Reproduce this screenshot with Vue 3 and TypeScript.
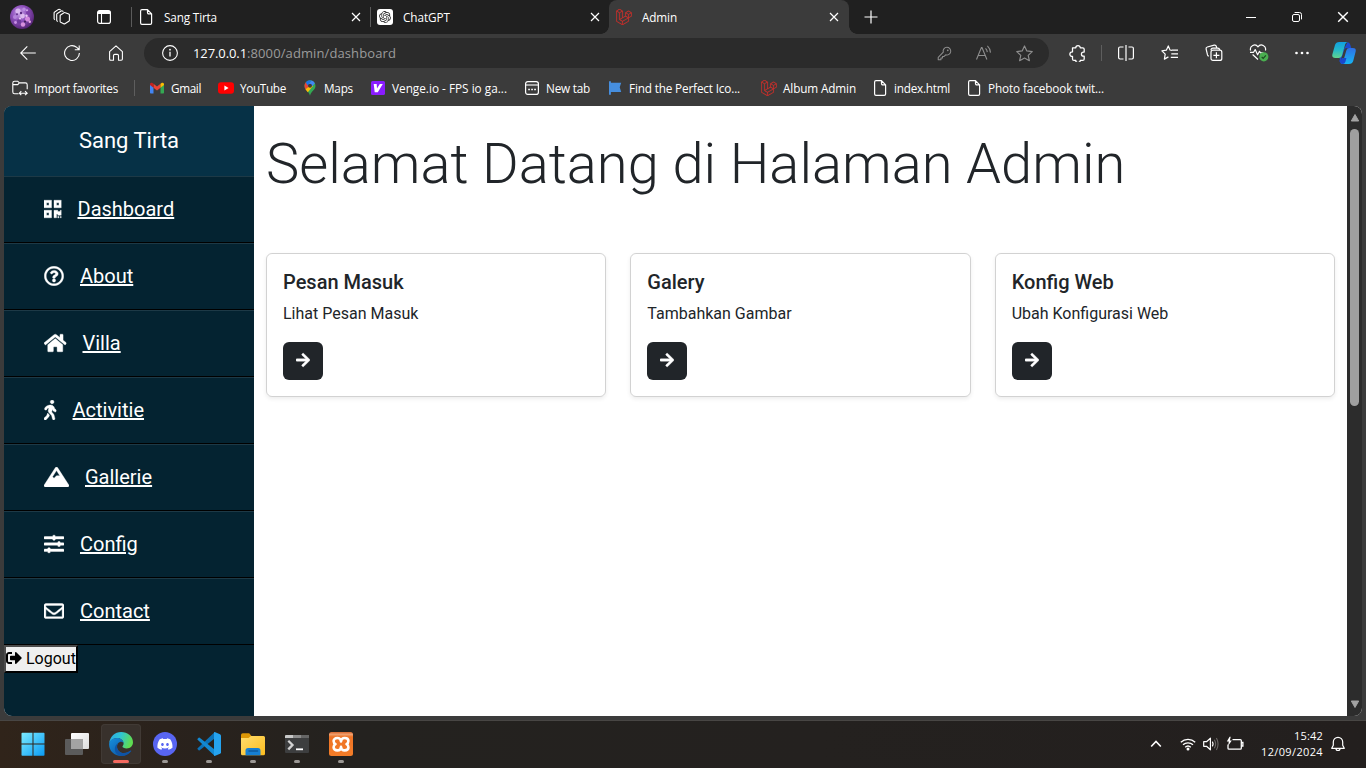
<script setup lang="ts">
import type { Directive } from 'vue'

interface Tab { id: string; title: string; icon: string; width: number; active?: boolean }
interface Bookmark { title: string; icon: string; slot: number; width: number }
interface MenuItem { label: string; icon: string; em: number }
interface Card { title: string; text: string }
interface App { icon: string; state: 'none' | 'open' | 'focus' }

const tabs: Tab[] = [
  { id: 'home', title: 'Sang Tirta', icon: 'doc', width: 53 },
  { id: 'gpt', title: 'ChatGPT', icon: 'gpt', width: 47 },
  { id: 'admin', title: 'Admin', icon: 'laravel', width: 35, active: true },
]

const bookmarks: Bookmark[] = [
  { title: 'Gmail', icon: 'gmail', slot: 69, width: 30 },
  { title: 'YouTube', icon: 'youtube', slot: 84, width: 46 },
  { title: 'Maps', icon: 'maps', slot: 68, width: 29 },
  { title: 'Venge.io - FPS io ga...', icon: 'venge', slot: 154, width: 115 },
  { title: 'New tab', icon: 'newtab', slot: 83, width: 44 },
  { title: 'Find the Perfect Ico...', icon: 'flag', slot: 154, width: 111 },
  { title: 'Album Admin', icon: 'laravel', slot: 111, width: 73 },
  { title: 'index.html', icon: 'doc', slot: 94, width: 56 },
  { title: 'Photo facebook twit...', icon: 'doc', slot: 150, width: 116 },
]

const menu: MenuItem[] = [
  { label: 'Dashboard', icon: 'qrcode', em: 0.875 },
  { label: 'About', icon: 'question', em: 1 },
  { label: 'Villa', icon: 'house', em: 1.125 },
  { label: 'Activitie', icon: 'walking', em: 0.625 },
  { label: 'Gallerie', icon: 'mountain', em: 1.25 },
  { label: 'Config', icon: 'sliders', em: 1 },
  { label: 'Contact', icon: 'envelope', em: 1 },
]

const cards: Card[] = [
  { title: 'Pesan Masuk', text: 'Lihat Pesan Masuk' },
  { title: 'Galery', text: 'Tambahkan Gambar' },
  { title: 'Konfig Web', text: 'Ubah Konfigurasi Web' },
]

const apps: App[] = [
  { icon: 'windows', state: 'none' },
  { icon: 'taskview', state: 'none' },
  { icon: 'edge', state: 'focus' },
  { icon: 'discord', state: 'open' },
  { icon: 'vscode', state: 'open' },
  { icon: 'folder', state: 'open' },
  { icon: 'terminal', state: 'open' },
  { icon: 'xampp', state: 'open' },
]

// Spreads the letters of a label evenly so that it fills the given width.
const vFit: Directive<HTMLElement, number> = {
  mounted(el, binding) {
    const count = (el.textContent ?? '').length
    const natural = el.getBoundingClientRect().width
    if (count > 0) el.style.letterSpacing = `${(binding.value - natural) / count}px`
  },
}
</script>

<template>
  <div class="screen">
    <svg class="sprite" width="0" height="0" aria-hidden="true">
      <defs>
        <linearGradient id="gWin" x1="0" y1="0" x2="1" y2="1"><stop offset="0" stop-color="#7cecff" /><stop offset="1" stop-color="#0a9bf5" /></linearGradient>
        <linearGradient id="gEdgeTop" x1="0" y1="0" x2="1" y2=".3"><stop offset="0" stop-color="#2aa5e8" /><stop offset=".5" stop-color="#2fc5d3" /><stop offset="1" stop-color="#5fdc52" /></linearGradient>
        <linearGradient id="gEdgeLow" x1="0" y1="0" x2="1" y2="1"><stop offset="0" stop-color="#1690dd" /><stop offset="1" stop-color="#0b4b98" /></linearGradient>
        <linearGradient id="gFolder" x1="0" y1="0" x2="1" y2="1"><stop offset="0" stop-color="#ffdd6e" /><stop offset="1" stop-color="#fcbc1e" /></linearGradient>
        <linearGradient id="gCopA" x1="0" y1="0" x2="0" y2="1"><stop offset="0" stop-color="#109fe0" /><stop offset=".5" stop-color="#25b9c9" /><stop offset="1" stop-color="#62d58c" /></linearGradient>
        <linearGradient id="gCopB" x1="0" y1="0" x2="0" y2="1"><stop offset="0" stop-color="#2f6fe6" /><stop offset="1" stop-color="#16b5f2" /></linearGradient>
        <radialGradient id="gAvatar" cx=".4" cy=".35" r=".7"><stop offset="0" stop-color="#c9a4e8" /><stop offset=".45" stop-color="#8f52bd" /><stop offset="1" stop-color="#51206f" /></radialGradient>
        <linearGradient id="gXampp" x1="0" y1="0" x2="0" y2="1"><stop offset="0" stop-color="#d8662c" /><stop offset=".1" stop-color="#f0a070" /><stop offset=".2" stop-color="#ee7426" /><stop offset="1" stop-color="#f47d28" /></linearGradient>
        <linearGradient id="gTask" x1="0" y1="0" x2="1" y2="1"><stop offset="0" stop-color="#ffffff" /><stop offset="1" stop-color="#dcdcdc" /></linearGradient>
      </defs>

      <symbol id="i-avatar" viewBox="0 0 24 24">
        <circle cx="12" cy="12" r="12" fill="url(#gAvatar)" />
        <circle cx="8" cy="6" r="2.6" fill="#d9b8f0" /><circle cx="14" cy="4.400" r="1.800" fill="#b98be0" />
        <circle cx="5" cy="12" r="2" fill="#b583dc" /><circle cx="12.500" cy="11" r="2.400" fill="#dcb9ee" />
        <circle cx="18" cy="8" r="2" fill="#7c3ea8" /><circle cx="17.500" cy="14" r="2.500" fill="#d58ade" />
        <circle cx="9" cy="16.500" r="2.200" fill="#6f3a9c" /><circle cx="13" cy="19.500" r="2.200" fill="#d791dd" />
        <circle cx="11" cy="8" r="1.200" fill="#592a80" /><circle cx="15" cy="16.600" r="1.100" fill="#45205f" />
        <circle cx="5.500" cy="17.500" r="1.400" fill="#c890e5" /><circle cx="19.800" cy="16.800" r="1.200" fill="#e3a8e5" />
        <circle cx="16.500" cy="10.800" r="1.200" fill="#e6c6f2" /><circle cx="10" cy="13.600" r="1" fill="#ecd0f6" />
        <circle cx="7" cy="9.300" r="1" fill="#64318e" /><circle cx="17" cy="5.200" r="1" fill="#d3a9ea" />
      </symbol>
      <symbol id="i-spaces" viewBox="0 0 20 20">
        <g fill="none" stroke="currentColor" stroke-width="1.1" stroke-linejoin="round">
          <path d="M8.200 8.200 12 5.700q.7-.4 1.400 0l3.300 1.400q.7.3.7 1v5.100q0 .7-.6 1l-3.900 2.500q-.6.300-1.200 0L8.700 15.300q-.6-.3-.6-1z" />
          <path d="M5.800 14.400 5.100 14q-.4-.3-.4-.9V7.500q0-.7.600-1L9.200 4q.6-.4 1.200 0l1 .5" />
          <path d="m3 12.700-.5-.3q-.4-.3-.4-.9V6q0-.7.600-1l3.800-2.600q.6-.3 1.200 0l1 .5" />
        </g>
      </symbol>
      <symbol id="i-panel" viewBox="0 0 16 16">
        <rect x="1.600" y="1.600" width="12.800" height="12.800" rx="2.200" fill="none" stroke="currentColor" stroke-width="1.200" />
        <path d="M1.500 5V3.500q0-2 2-2h9q2 0 2 2V5z" fill="currentColor" /><path d="M5.500 5v9.400" stroke="currentColor" stroke-width="1.100" />
      </symbol>
      <symbol id="i-doc" viewBox="0 0 16 16">
        <path d="M9.500.6H4Q2.600.6 2.600 2v12q0 1.400 1.400 1.400h8.200q1.400 0 1.400-1.400V4.900zv3q0 1.300 1.300 1.300h2.800" fill="none" stroke="currentColor" stroke-width="1.200" stroke-linejoin="round" />
      </symbol>
      <symbol id="i-gpt" viewBox="0 0 24 24">
        <rect width="24" height="24" rx="4.500" fill="#fff" />
        <path transform="translate(3.200 3.200) scale(.733)" fill="#222" d="M22.2819 9.8211a5.9847 5.9847 0 0 0-.5157-4.9108 6.0462 6.0462 0 0 0-6.5098-2.9A6.0651 6.0651 0 0 0 4.9807 4.1818a5.9847 5.9847 0 0 0-3.9977 2.9 6.0462 6.0462 0 0 0 .7427 7.0966 5.98 5.98 0 0 0 .511 4.9107 6.051 6.051 0 0 0 6.5146 2.9001A5.9847 5.9847 0 0 0 13.2599 24a6.0557 6.0557 0 0 0 5.7718-4.2058 5.9894 5.9894 0 0 0 3.9977-2.9001 6.0557 6.0557 0 0 0-.7475-7.0729zm-9.022 12.6081a4.4755 4.4755 0 0 1-2.8764-1.0408l.1419-.0804 4.7783-2.7582a.7948.7948 0 0 0 .3927-.6813v-6.7369l2.02 1.1686a.071.071 0 0 1 .038.052v5.5826a4.504 4.504 0 0 1-4.4945 4.4944zm-9.6607-4.1254a4.4708 4.4708 0 0 1-.5346-3.0137l.142.0852 4.783 2.7582a.7712.7712 0 0 0 .7806 0l5.8428-3.3685v2.3324a.0804.0804 0 0 1-.0332.0615L9.74 19.9502a4.4992 4.4992 0 0 1-6.1408-1.6464zM2.3408 7.8956a4.485 4.485 0 0 1 2.3655-1.9728V11.6a.7664.7664 0 0 0 .3879.6765l5.8144 3.3543-2.0201 1.1685a.0757.0757 0 0 1-.071 0l-4.8303-2.7865A4.504 4.504 0 0 1 2.3408 7.872zm16.5963 3.8558L13.1038 8.364 15.1192 7.2a.0757.0757 0 0 1 .071 0l4.8303 2.7913a4.4944 4.4944 0 0 1-.6765 8.1042v-5.6772a.79.79 0 0 0-.407-.667zm2.0107-3.0231l-.142-.0852-4.7735-2.7818a.7759.7759 0 0 0-.7854 0L9.409 9.2297V6.8974a.0662.0662 0 0 1 .0284-.0615l4.8303-2.7866a4.4992 4.4992 0 0 1 6.6802 4.66zM8.3065 12.863l-2.02-1.1638a.0804.0804 0 0 1-.038-.0567V6.0742a4.4992 4.4992 0 0 1 7.3757-3.4537l-.142.0805L8.704 5.459a.7948.7948 0 0 0-.3927.6813zm1.0976-2.3654l2.602-1.4998 2.6069 1.4998v2.9994l-2.5974 1.4997-2.6067-1.4997Z" />
      </symbol>
      <symbol id="i-laravel" viewBox="0 0 24 24">
        <path fill="#e0302a" stroke="#e0302a" stroke-width=".35" d="M23.642 5.43a.364.364 0 01.014.1v5.149c0 .135-.073.26-.189.326l-4.323 2.49v4.934a.378.378 0 01-.188.326L9.93 23.949a.316.316 0 01-.066.027c-.008.002-.016.008-.024.01a.348.348 0 01-.192 0c-.011-.002-.02-.008-.03-.012-.02-.008-.042-.014-.062-.025L.533 18.755a.376.376 0 01-.189-.326V2.974c0-.033.005-.066.014-.098.003-.012.01-.02.014-.032a.369.369 0 01.023-.058c.004-.013.015-.022.023-.033l.033-.045c.012-.01.025-.018.037-.027.014-.012.027-.024.041-.034H.53L5.043.05a.375.375 0 01.375 0L9.93 2.647h.002c.015.01.027.021.04.033l.038.027c.013.014.02.03.033.045.008.011.02.021.025.033.01.02.017.038.024.058.003.011.01.021.013.032.01.031.014.064.014.098v9.652l3.76-2.164V5.527c0-.033.004-.066.013-.098.003-.01.01-.02.013-.032a.487.487 0 01.024-.059c.007-.012.018-.02.025-.033.012-.015.021-.03.033-.043.012-.012.025-.02.037-.028.014-.01.026-.023.041-.032h.001l4.513-2.598a.375.375 0 01.375 0l4.513 2.598c.016.01.027.021.042.031.012.01.025.018.036.028.013.014.022.03.034.044.008.012.019.021.024.033.011.02.018.04.024.06.006.01.012.021.015.032zm-.74 5.032V6.179l-1.578.908-2.182 1.256v4.283zm-4.51 7.75v-4.287l-2.147 1.225-6.126 3.498v4.325zM1.093 3.624v14.588l8.273 4.761v-4.325l-4.322-2.445-.002-.003H5.04c-.014-.01-.025-.021-.04-.031-.011-.01-.024-.018-.035-.027l-.001-.002c-.013-.012-.021-.025-.031-.04-.01-.011-.021-.022-.028-.036h-.003c-.008-.014-.013-.031-.02-.047-.006-.016-.014-.027-.018-.043a.49.49 0 01-.008-.057c-.002-.014-.006-.027-.006-.041V5.789l-2.18-1.257zM5.23.81L1.47 2.974l3.76 2.164 3.758-2.164zm1.956 13.505l2.182-1.256V3.624l-1.58.91-2.182 1.255v9.435zm11.581-10.95l-3.76 2.163 3.76 2.163 3.759-2.164zm-.376 4.978L16.21 7.087l-1.58-.907v4.283l2.182 1.256 1.58.908zm-8.65 9.654l5.514-3.148 2.756-1.572-3.757-2.163-4.323 2.489-3.941 2.27z" />
      </symbol>
      <symbol id="i-x" viewBox="0 0 10 10"><path d="m1 1 8 8M9 1 1 9" stroke="currentColor" stroke-width="1.200" fill="none" /></symbol>
      <symbol id="i-plus" viewBox="0 0 14 14"><path d="M7 .5v13M.5 7h13" stroke="currentColor" stroke-width="1.200" /></symbol>
      <symbol id="i-min" viewBox="0 0 10 10"><path d="M0 5.500h10" stroke="currentColor" stroke-width="1" /></symbol>
      <symbol id="i-restore" viewBox="0 0 10 10"><g fill="none" stroke="currentColor"><rect x=".5" y="2.500" width="7" height="7" rx="1.500" /><path d="M2.600.5H7.500q2 0 2 2v4.900" /></g></symbol>

      <symbol id="i-back" viewBox="0 0 16 16"><path d="M15.800 8H.8M7.300 1.300.7 8l6.600 6.700" fill="none" stroke="currentColor" stroke-width="1.100" /></symbol>
      <symbol id="i-reload" viewBox="0 0 16 16"><path d="M15.400 8A7.400 7.400 0 1 1 12.800 2.400L15 4.600M15.200.4v4.400h-4.400" fill="none" stroke="currentColor" stroke-width="1.100" /></symbol>
      <symbol id="i-homeo" viewBox="0 0 16 16"><path d="M1.600 6.600 8 .9l6.400 5.700v7.500q0 1.200-1.200 1.200h-2.700V10.600q0-1.200-1.200-1.200H6.700q-1.200 0-1.200 1.200v4.700H2.800q-1.200 0-1.200-1.200z" fill="none" stroke="currentColor" stroke-width="1.100" stroke-linejoin="round" /></symbol>
      <symbol id="i-info" viewBox="0 0 16 16"><circle cx="8" cy="8" r="7.400" fill="none" stroke="currentColor" stroke-width="1.100" /><path d="M8 6.700v4.900" stroke="currentColor" stroke-width="1.300" /><circle cx="8" cy="4.700" r=".9" fill="currentColor" /></symbol>
      <symbol id="i-key" viewBox="0 0 16 16"><path d="M10.500 1.400a4.100 4.100 0 1 1-1.200 8L7.600 11.100H5.900v1.700H4.200v1.800H1.300v-2.500L6.700 6.600a4.100 4.100 0 0 1 3.800-5.200z" fill="none" stroke="currentColor" stroke-width="1.100" stroke-linejoin="round" /><circle cx="11.500" cy="4.600" r=".9" fill="currentColor" /></symbol>
      <symbol id="i-read" viewBox="0 0 18 16"><g fill="none" stroke="currentColor" stroke-width="1.100"><path d="m1.500 14.500 4.900-12h.6l4.900 12M3.100 10.500h7.200M10.500 3.300q1.600 1.500 1.800 3.800M12.400.9q2.700 2.500 3.100 6.700" /></g></symbol>
      <symbol id="i-star" viewBox="0 0 16 16"><path d="m8 .9 2.200 4.700 5.100.6-3.800 3.500 1.100 5.100L8 12.300l-4.600 2.500 1.100-5.100L.7 6.200l5.100-.6z" fill="none" stroke="currentColor" stroke-width="1.100" stroke-linejoin="round" /></symbol>
      <symbol id="i-puzzle" viewBox="0 0 16 16"><path d="M3.300 2.700h3.100a2.100 2.100 0 0 1 4.200 0h2.300q1.400 0 1.400 1.400v2.600h-.7a1.900 1.900 0 0 0 0 3.800h.7v2.600q0 1.400-1.400 1.400h-2.300a2.100 2.100 0 0 1-4.200 0H4.700q-1.400 0-1.400-1.400v-2.400H2.900a2.100 2.100 0 0 1 0-4.200h.4z" fill="none" stroke="currentColor" stroke-width="1.200" stroke-linejoin="round" /></symbol>
      <symbol id="i-split" viewBox="0 0 16 16"><path d="M5.500 2H2Q.6 2 .6 3.400v9.200Q.6 14 2 14h3.500M10.500 2H14q1.400 0 1.400 1.400v9.200q0 1.400-1.400 1.400h-3.500M8 0v16" fill="none" stroke="currentColor" stroke-width="1.200" /></symbol>
      <symbol id="i-favs" viewBox="0 0 18 16"><path d="M10.800 5.300 9 5 7.300.9 5.300 5.200.9 5.900l3.300 3.200-.8 5 4-2.200M10.800 5.200h6.200M10.300 8.800H17M9.800 12.300H17" fill="none" stroke="currentColor" stroke-width="1.200" stroke-linejoin="round" /></symbol>
      <symbol id="i-collect" viewBox="0 0 18 18"><g fill="none" stroke="currentColor" stroke-width="1.200"><rect x="6" y="6.200" width="10.800" height="10.200" rx="2" /><path d="M11.400 8.300v6M8.400 11.300h6M3.800 12.200q-1-.2-1.300-1.300L1.100 5q-.3-1.600 1.200-2L9.200 1.200q1.600-.4 2.100 1.100l.5 1.900M6 6.200q0-2 2-2h4.800q1.600 0 2 2" /></g></symbol>
      <symbol id="i-heart" viewBox="0 0 20 18"><path d="M1.600 6.500A4.200 4.200 0 0 1 9 2.800a4.200 4.200 0 0 1 7.400 3.700M3.600 10.500 9 15.500M1 8.300h3.600l1.600-2.700 2.400 5.200 1.900-3.500 1 1.500h3" fill="none" stroke="currentColor" stroke-width="1.200" stroke-linejoin="round" /><circle cx="14.800" cy="12.800" r="4.600" fill="#4aae50" /><path d="m12.700 13 1.500 1.400 2.700-3" stroke="#1f4a22" stroke-width="1.200" fill="none" /></symbol>
      <symbol id="i-dots" viewBox="0 0 16 16"><g fill="currentColor"><circle cx="2.500" cy="8" r="1.350" /><circle cx="8" cy="8" r="1.350" /><circle cx="13.500" cy="8" r="1.350" /></g></symbol>
      <symbol id="i-copilot" viewBox="0 0 24 24">
        <path d="M15.500 1.200q2 0 2.700 2.200L19.300 7H15q-2.300 0-3 2.200l-3.200 10.300h5.300l-.8 2.300q-.5 1.200-2 1.200-2.300 0-2.900-2.200l-1-4z" fill="#1b49cf" />
        <path d="M7.300 1h8.500q-2 .2-2.600 2.300L10 14.600Q9.300 17 7 17H3.200Q-.5 17 .4 13.300L3 4q.9-3 4.300-3z" fill="url(#gCopA)" />
        <path d="M16.900 23H8.500q2-.2 2.600-2.300l3.200-11.300Q15 7 17.300 7h3.600q3.600 0 2.700 3.700L21.200 20q-.9 3-4.300 3z" fill="url(#gCopB)" />
        <path d="M10 17q-.8 2.500-3 2.500L8.400 22q.8 1 2.300 1 2 0 2.700-2.300l1-3.700z" fill="#1a46cc" />
      </symbol>

      <symbol id="i-import" viewBox="0 0 16 16"><g fill="none" stroke="currentColor" stroke-width="1.100"><path d="M6.500 13.800H2.600Q.8 13.800.8 12V3Q.8 1.200 2.600 1.200h3.100l1.700 1.700h6q1.800 0 1.800 1.800v4.500M.8 4.600h4.900l1.700-1.700" /><path d="m9.300 11.200-2 2 2 2M13 11.200l2.200 2-2.200 2M7.500 13.200h7.400" /></g></symbol>
      <symbol id="i-gmail" viewBox="0 0 16 16"><path d="M1 4.200v8.600q0 .7.800.7h2.700V7.200z" fill="#4285f4" /><path d="M15 4.200v8.600q0 .7-.8.7h-2.700V7.200z" fill="#34a853" /><path d="M4.500 7.700V3.800L8 6.500l3.500-2.700v3.900L8 10.400z" fill="#ea4335" /><path d="M1 4.300q0-2.200 2.100-1.500l1.400 1v3.900L1 5z" fill="#c5221f" /><path d="M15 4.300q0-2.200-2.100-1.500l-1.400 1v3.900L15 5z" fill="#fbbc04" /></symbol>
      <symbol id="i-youtube" viewBox="0 0 16 16"><rect y="2.300" width="16" height="11.500" rx="3" fill="#f00" /><path d="M6.400 5.600v4.900l4.200-2.450z" fill="#fff" /></symbol>
      <symbol id="i-maps" viewBox="0 0 16 16"><path d="M13.500 5.800c0 4.200-4.300 5.200-5.500 10-1.200-4.800-5.500-5.800-5.500-10a5.500 5.500 0 0 1 11 0z" fill="#34a853" /><path d="M2.500 5.800A5.500 5.500 0 0 1 3.800 2.200L8 5.800 3.600 9.500a7 7 0 0 1-1.100-3.700z" fill="#ea4335" /><path d="M3.800 2.200A5.500 5.500 0 0 1 9.700.5L5.500 5.500z" fill="#1a73e8" /><path d="M9.700.5a5.500 5.500 0 0 1 3.200 2.700L8.300 8.600 8 5.800 6 5z" fill="#4285f4" /><path d="M8 5.800 3.500 9.300c.6 1 1.500 1.900 2.300 2.900L11 6z" fill="#fbbc04" /><circle cx="8" cy="5.800" r="2" fill="#3c3c3c" /></symbol>
      <symbol id="i-venge" viewBox="0 0 16 16"><rect x="1" y="1" width="14" height="14" rx="1.600" fill="#8a1cff" /><path d="M3.700 4h3l.3 4.400L9.800 4h3l-5 8.300H4.700z" fill="#fff" /></symbol>
      <symbol id="i-newtab" viewBox="0 0 16 16"><rect x="1.600" y="1.600" width="12.800" height="12.800" rx="2.200" fill="none" stroke="currentColor" stroke-width="1.200" /><path d="M1.600 5h12.800" stroke="currentColor" stroke-width="1.100" /><path d="M4.200 9.500h1.700M7.200 9.500h1.700M10.200 9.500h1.700" stroke="currentColor" stroke-width="1.700" /></symbol>
      <symbol id="i-flag" viewBox="0 0 16 16"><path d="M2 1.200h1.900v1.600h10.300l-1.500 4.500 1.500 4.600H3.900v2.900H2z" fill="#468ede" /></symbol>

      <symbol id="i-qrcode" viewBox="0 0 448 512"><path fill="currentColor" d="M0 224h192V32H0v192zM64 96h64v64H64V96zm192-64v192h192V32H256zm128 128h-64V96h64v64zM0 480h192V288H0v192zm64-128h64v64H64v-64zm352-64h32v128h-96v-32h-32v96h-64V288h96v32h64v-32zm0 160h32v32h-32v-32zm-64 0h32v32h-32v-32z" /></symbol>
      <symbol id="i-question" viewBox="0 0 512 512"><path fill="currentColor" d="M256 8C119.043 8 8 119.083 8 256c0 136.997 111.043 248 248 248s248-111.003 248-248C504 119.083 392.957 8 256 8zm0 448c-110.532 0-200-89.431-200-200 0-110.495 89.472-200 200-200 110.491 0 200 89.471 200 200 0 110.53-89.431 200-200 200zm107.244-255.2c0 67.052-72.421 68.084-72.421 92.863V300c0 6.627-5.373 12-12 12h-45.647c-6.627 0-12-5.373-12-12v-8.659c0-35.745 27.1-50.034 47.579-61.516 17.561-9.845 28.324-16.541 28.324-29.579 0-17.246-21.999-28.693-39.784-28.693-23.189 0-33.894 10.977-48.942 29.969-4.057 5.12-11.46 6.071-16.666 2.124l-27.824-21.098c-5.107-3.872-6.251-11.066-2.644-16.363C184.846 131.491 214.94 112 261.794 112c49.071 0 101.45 38.304 101.45 88.8zM298 368c0 23.159-18.841 42-42 42s-42-18.841-42-42 18.841-42 42-42 42 18.841 42 42z" /></symbol>
      <symbol id="i-house" viewBox="0 0 576 512"><path fill="currentColor" d="M280.37 148.26L96 300.11V464a16 16 0 0 0 16 16l112.06-.29a16 16 0 0 0 15.92-16V368a16 16 0 0 1 16-16h64a16 16 0 0 1 16 16v95.64a16 16 0 0 0 16 16.05L464 480a16 16 0 0 0 16-16V300L295.67 148.26a12.19 12.19 0 0 0-15.3 0zM571.6 251.47L488 182.56V44.05a12 12 0 0 0-12-12h-56a12 12 0 0 0-12 12v72.61L318.47 43a48 48 0 0 0-61 0L4.34 251.47a12 12 0 0 0-1.6 16.9l25.5 31A12 12 0 0 0 45.15 301l235.22-193.74a12.19 12.19 0 0 1 15.3 0L530.9 301a12 12 0 0 0 16.9-1.6l25.5-31a12 12 0 0 0-1.7-16.93z" /></symbol>
      <symbol id="i-walking" viewBox="0 0 320 512"><path fill="currentColor" d="M208 96c26.5 0 48-21.5 48-48S234.5 0 208 0s-48 21.500-48 48 21.500 48 48 48zm94.500 149.100l-23.300-11.800-9.700-29.400c-14.700-44.600-55.700-75.800-102.200-75.900-36-.1-55.900 10.100-93.300 25.200-21.600 8.700-39.300 25.200-49.700 46.200L17.600 213c-7.800 15.800-1.500 35 14.200 42.900 15.600 7.900 34.600 1.500 42.500-14.300L81 228c3.500-7 9.300-12.500 16.500-15.400l26.800-10.800-15.200 60.700c-5.200 20.800.4 42.900 14.900 58.800l59.900 65.400c7.200 7.900 12.300 17.400 14.900 27.700l18.300 73.300c4.300 17.100 21.700 27.600 38.800 23.300 17.100-4.300 27.600-21.700 23.300-38.800l-22.200-89c-2.600-10.300-7.700-19.900-14.900-27.700l-45.500-49.700 17.200-68.700 5.500 16.500c5.300 16.100 16.700 29.400 31.700 37l23.300 11.800c15.600 7.900 34.600 1.500 42.500-14.300 7.700-15.700 1.400-35.100-14.300-43zM73.600 385.800c-3.200 8.100-8 15.400-14.200 21.500l-50 50.100c-12.500 12.500-12.500 32.800 0 45.300s32.700 12.500 45.200 0l59.400-59.400c6.100-6.100 10.900-13.400 14.200-21.500l13.500-33.800c-55.300-60.300-38.700-41.800-47.400-53.700l-20.700 51.500z" /></symbol>
      <symbol id="i-mountain" viewBox="0 0 640 512"><path fill="currentColor" d="M634.92 462.7l-288-448C341.03 5.54 330.89 0 320 0s-21.03 5.54-26.92 14.7l-288 448a32.001 32.001 0 0 0-1.17 32.64A32.004 32.004 0 0 0 32 512h576c11.71 0 22.48-6.39 28.09-16.67a31.983 31.983 0 0 0-1.17-32.63zM320 91.18L405.39 224H320l-64 64-38.06-38.06L320 91.18z" /></symbol>
      <symbol id="i-sliders" viewBox="0 0 512 512"><path fill="currentColor" d="M496 384H160v-16c0-8.800-7.200-16-16-16h-32c-8.800 0-16 7.200-16 16v16H16c-8.800 0-16 7.200-16 16v32c0 8.800 7.200 16 16 16h80v16c0 8.800 7.200 16 16 16h32c8.800 0 16-7.200 16-16v-16h336c8.800 0 16-7.200 16-16v-32c0-8.800-7.200-16-16-16zm0-160h-80v-16c0-8.800-7.200-16-16-16h-32c-8.800 0-16 7.200-16 16v16H16c-8.800 0-16 7.200-16 16v32c0 8.800 7.200 16 16 16h336v16c0 8.800 7.200 16 16 16h32c8.800 0 16-7.200 16-16v-16h80c8.800 0 16-7.200 16-16v-32c0-8.800-7.200-16-16-16zm0-160H288V48c0-8.800-7.200-16-16-16h-32c-8.800 0-16 7.200-16 16v16H16C7.200 64 0 71.200 0 80v32c0 8.800 7.200 16 16 16h208v16c0 8.800 7.200 16 16 16h32c8.800 0 16-7.200 16-16v-16h208c8.800 0 16-7.200 16-16V80c0-8.800-7.200-16-16-16z" /></symbol>
      <symbol id="i-envelope" viewBox="0 0 512 512"><path fill="currentColor" d="M464 64H48C21.49 64 0 85.49 0 112v288c0 26.51 21.49 48 48 48h416c26.51 0 48-21.49 48-48V112c0-26.51-21.49-48-48-48zm0 48v40.805c-22.422 18.259-58.168 46.651-134.587 106.49-16.841 13.247-50.201 45.072-73.413 44.701-23.208.375-56.579-31.459-73.413-44.701C106.18 199.465 70.425 171.067 48 152.805V112h416zM48 400V214.398c22.914 18.251 55.409 43.862 104.938 82.646 21.857 17.205 60.134 55.186 103.062 54.955 42.717.231 80.509-37.199 103.053-54.947 49.528-38.783 82.032-64.401 104.947-82.653V400H48z" /></symbol>
      <symbol id="i-signout" viewBox="0 0 512 512"><path fill="currentColor" d="M497 273L329 441c-15 15-41 4.500-41-17v-96H152c-13.300 0-24-10.700-24-24v-96c0-13.300 10.700-24 24-24h136V88c0-21.400 25.900-32 41-17l168 168c9.300 9.400 9.300 24.600 0 34zM192 436v-40c0-6.600-5.400-12-12-12H96c-17.700 0-32-14.300-32-32V160c0-17.700 14.300-32 32-32h84c6.600 0 12-5.400 12-12V76c0-6.600-5.400-12-12-12H96c-53 0-96 43-96 96v192c0 53 43 96 96 96h84c6.600 0 12-5.400 12-12z" /></symbol>
      <symbol id="i-arrow" viewBox="0 0 448 512"><path fill="currentColor" d="M190.500 66.900l22.200-22.200c9.400-9.400 24.600-9.400 33.900 0L441 239c9.400 9.400 9.400 24.600 0 33.900L246.600 467.300c-9.400 9.400-24.600 9.400-33.900 0l-22.200-22.200c-9.500-9.500-9.300-25 .4-34.300L311.400 296H24c-13.300 0-24-10.700-24-24v-32c0-13.300 10.700-24 24-24h287.400L190.900 101.200c-9.800-9.300-10-24.800-.4-34.300z" /></symbol>

      <symbol id="i-windows" viewBox="0 0 24 24"><g fill="url(#gWin)"><path d="M.5 1.500q0-.8.8-.8h10.200v10.800H.5z M12.500.7h10.200q.8 0 .8.8v10H12.500z M.5 12.500h11v11.200H1.300q-.8 0-.8-.8z M12.500 12.500h11v10.400q0 .8-.8.8H12.500z" /></g></symbol>
      <symbol id="i-taskview" viewBox="0 0 24 24"><rect x="6" y="1" width="18" height="16" rx="1" fill="url(#gTask)" /><rect x="0" y="7" width="18" height="16" rx="1" fill="#5b5b5b" /><path d="M6 7h12v10H6z" fill="#a3a3a3" /></symbol>
      <symbol id="i-edge" viewBox="0 0 24 24">
        <path d="M.2 11.200C.9 4.600 6 0 12.100 0 18.700 0 24 4.800 24 10.300c0 3.600-2.700 6.200-6.300 6.200-2.500 0-4.300-.9-4.300-1.900 0-.8 1.200-1.100 1.200-3.200 0-2.800-2.700-5.500-6.500-5.500-4 0-6.700 2.200-7.900 5.300z" fill="url(#gEdgeTop)" />
        <path d="M.1 12.500C.1 8.700 3.500 5.900 8.100 5.900c3.800 0 6.500 2.600 6.500 5.300-1-1.200-2.300-1.700-3.700-1.300-2 .6-3.200 2.900-2.800 5.600.6 3.800 4.400 6.500 8.900 5.600l4.700-1.900C19.700 22.200 16 24 12 24 5.300 24 .1 18.800.1 12.500z" fill="url(#gEdgeLow)" />
        <path d="M9.200 11.100c-2 2.100-1.600 6.200 1.100 8.300 3 2.400 7.200 1.800 11.200-.8.500-.3 1 .1.700.6C20 22.300 16.200 24 12.600 24 7 23.600 4.800 18 6.300 14.500c.6-1.500 1.600-2.700 2.900-3.400z" fill="#0f54a5" />
      </symbol>
      <symbol id="i-discord" viewBox="0 0 24 24"><circle cx="12" cy="12" r="12" fill="#5865f2" /><path transform="translate(4.400 4.400) scale(.63)" fill="#fff" d="M20.317 4.3698a19.7913 19.7913 0 00-4.8851-1.5152.0741.0741 0 00-.0785.0371c-.211.3753-.4447.8648-.6083 1.2495-1.8447-.2762-3.68-.2762-5.4868 0-.1636-.3933-.4058-.8742-.6177-1.2495a.077.077 0 00-.0785-.037 19.7363 19.7363 0 00-4.8852 1.515.0699.0699 0 00-.0321.0277C.5334 9.0458-.319 13.5799.0992 18.0578a.0824.0824 0 00.0312.0561c2.0528 1.5076 4.0413 2.4228 5.9929 3.0294a.0777.0777 0 00.0842-.0276c.4616-.6304.8731-1.2952 1.226-1.9942a.076.076 0 00-.0416-.1057c-.6528-.2476-1.2743-.5495-1.8722-.8923a.077.077 0 01-.0076-.1277c.1258-.0943.2517-.1923.3718-.2914a.0743.0743 0 01.0776-.0105c3.9278 1.7933 8.18 1.7933 12.0614 0a.0739.0739 0 01.0785.0095c.1202.099.246.1981.3728.2924a.077.077 0 01-.0066.1276 12.2986 12.2986 0 01-1.873.8914.0766.0766 0 00-.0407.1067c.3604.698.7719 1.3628 1.225 1.9932a.076.076 0 00.0842.0286c1.961-.6067 3.9495-1.5219 6.0023-3.0294a.077.077 0 00.0313-.0552c.5004-5.177-.8382-9.6739-3.5485-13.6604a.061.061 0 00-.0312-.0286zM8.02 15.3312c-1.1825 0-2.1569-1.0857-2.1569-2.419 0-1.3332.9555-2.4189 2.157-2.4189 1.2108 0 2.1757 1.0952 2.1568 2.419 0 1.3332-.9555 2.4189-2.1569 2.4189zm7.9748 0c-1.1825 0-2.1569-1.0857-2.1569-2.419 0-1.3332.9554-2.4189 2.1569-2.4189 1.2108 0 2.1757 1.0952 2.1568 2.419 0 1.3332-.946 2.4189-2.1568 2.4189Z" /></symbol>
      <symbol id="i-vscode" viewBox="0 0 24 24"><path d="M17.600 6.500 2.700 18.300q-.6.400-1.100 0l-1-1q-.5-.6 0-1.100L17.300.4z" fill="#0b72b8" /><path d="M17.600 17.500 2.700 5.700q-.6-.4-1.100 0l-1 1q-.5.6 0 1.100L17.300 23.600z" fill="#1389d2" /><path d="m17 .3.700-.3L23 2.300q1 .5 1 1.500v16.400q0 1-1 1.500L17.700 24l-.7-.3z" fill="#25a3ef" /></symbol>
      <symbol id="i-folder" viewBox="0 0 24 24"><path d="M0 3q0-1.800 1.800-1.800h6.400L10.500 4H22v3H0z" fill="#dc9706" /><path d="M0 6h7.500l2.500-2h12.500q1.500 0 1.500 1.500v16.300q0 1.500-1.500 1.500h-21Q0 23.300 0 21.800z" fill="url(#gFolder)" /><path d="M4.500 23.300v-4.600q0-2.600 2.600-2.600h9.800q2.600 0 2.600 2.600v4.600z" fill="#167fd2" /><path d="M8 19h8.500" stroke="#0e5a9d" stroke-width="1.500" stroke-linecap="round" /></symbol>
      <symbol id="i-terminal" viewBox="0 0 24 24"><path d="M0 4q0-1 1-1h22q1 0 1 1v2.200H0z" fill="#c8c8c8" /><path d="M8 3h8v3.200H8z" fill="#8c8c8c" /><path d="M16 3h8v3.200h-8z" fill="#666" /><path d="M0 6h24v14q0 1-1 1H1q-1 0-1-1z" fill="#3d3e3f" /><path d="m3.300 8.800 4.200 4.200-4.200 4.400" fill="none" stroke="#d2d2d2" stroke-width="2.300" /><path d="M11 17.300h7" stroke="#fff" stroke-width="1.800" /></symbol>
      <symbol id="i-xampp" viewBox="0 0 24 24"><rect width="24" height="24" rx="2.500" fill="url(#gXampp)" /><path d="M12 9.500C12 7.300 13.500 6 15.700 6c2.300 0 3.700 1.300 3.700 3.100 0 1.500-.7 2.500-1.900 3.100 1.200.6 1.900 1.600 1.900 3.100 0 1.800-1.400 3.100-3.700 3.100-2.200 0-3.700-1.300-3.700-3.500 0 2.200-1.500 3.500-3.700 3.500-2.300 0-3.700-1.300-3.700-3.100 0-1.500.7-2.500 1.900-3.100C5.300 11.600 4.600 10.600 4.600 9.100 4.600 7.300 6 6 8.300 6 10.500 6 12 7.300 12 9.500z" fill="none" stroke="#fff" stroke-width="2.600" stroke-linejoin="round" /></symbol>

      <symbol id="i-chev" viewBox="0 0 12 12"><path d="m1.200 8.500 4.800-5 4.800 5" fill="none" stroke="currentColor" stroke-width="1.600" /></symbol>
      <symbol id="i-wifi" viewBox="0 0 16 16"><g fill="none" stroke="currentColor" stroke-width="1.300"><path d="M.8 6.200a10.500 10.500 0 0 1 14.400 0M3 8.800a7.300 7.300 0 0 1 10 0M5.200 11.300a4.100 4.100 0 0 1 5.600 0" /></g><circle cx="8" cy="13" r="1.500" fill="currentColor" /></symbol>
      <symbol id="i-sound" viewBox="0 0 16 16"><path d="M.7 5.700h2.800L7.400 2.200v11.600L3.500 10.300H.7z" fill="none" stroke="currentColor" stroke-width="1.200" stroke-linejoin="round" /><path d="M9.400 5.600q1.400 2.400 0 4.800" fill="none" stroke="currentColor" stroke-width="1.200" /><path d="M11.400 3.700q2.500 4.300 0 8.600M13.400 2q3.300 6 0 12" fill="none" stroke="#6a6765" stroke-width="1.100" /></symbol>
      <symbol id="i-battery" viewBox="0 0 18 16"><path d="M6.500 3.600h7.800q1 0 1 1v7.600q0 1-1 1H3q-1 0-1-1V8.500M15.500 6.500h1.400v3.500h-1.400" fill="none" stroke="currentColor" stroke-width="1.300" /><path d="M3.600.7.800 5.500h2L2.200 9.800 5.800 4.600H3.900l.8-3.900z" fill="currentColor" /></symbol>
      <symbol id="i-bell" viewBox="0 0 16 16"><path d="M8 1.300a4.700 4.700 0 0 0-4.700 4.700v3.300L1.700 12.300h12.600l-1.600-3V6A4.700 4.700 0 0 0 8 1.300zM6 12.500a2 2 0 0 0 4 0" fill="none" stroke="currentColor" stroke-width="1.200" stroke-linejoin="round" /></symbol>
    </svg>

    <header class="tabstrip">
      <div class="lead">
        <svg class="s24"><use href="#i-avatar" /></svg>
        <svg class="s20"><use href="#i-spaces" /></svg>
        <svg class="s16"><use href="#i-panel" /></svg>
      </div>
      <div v-for="tab in tabs" :key="tab.id" class="tab" :class="{ active: tab.active }">
        <svg class="s16"><use :href="'#i-' + tab.icon" /></svg>
        <span class="tab-title"><span v-fit="tab.width" class="fit">{{ tab.title }}</span></span>
        <svg class="s10"><use href="#i-x" /></svg>
      </div>
      <div class="new-tab"><svg class="s14"><use href="#i-plus" /></svg></div>
      <div class="window-controls">
        <span><svg class="s10"><use href="#i-min" /></svg></span>
        <span><svg class="s10"><use href="#i-restore" /></svg></span>
        <span><svg class="s12"><use href="#i-x" /></svg></span>
      </div>
    </header>

    <div class="toolbar">
      <span class="tool"><svg class="s16"><use href="#i-back" /></svg></span>
      <span class="tool"><svg class="s16"><use href="#i-reload" /></svg></span>
      <span class="tool"><svg class="s16"><use href="#i-homeo" /></svg></span>
      <div class="address">
        <svg class="s16"><use href="#i-info" /></svg>
        <div class="url"><b v-fit="54" class="fit">127.0.0.1</b><span v-fit="149" class="fit">:8000/admin/dashboard</span></div>
        <span class="in-tool"><svg class="s15"><use href="#i-key" /></svg></span>
        <span class="in-tool"><svg class="wide"><use href="#i-read" /></svg></span>
        <span class="in-tool"><svg class="s17"><use href="#i-star" /></svg></span>
      </div>
      <span class="tool ext"><svg class="s17"><use href="#i-puzzle" /></svg></span>
      <i class="rule"></i>
      <span class="tool"><svg class="s16"><use href="#i-split" /></svg></span>
      <span class="tool"><svg class="wide"><use href="#i-favs" /></svg></span>
      <span class="tool"><svg class="s18"><use href="#i-collect" /></svg></span>
      <span class="tool health"><svg class="s20"><use href="#i-heart" /></svg></span>
      <span class="tool"><svg class="s16"><use href="#i-dots" /></svg></span>
      <span class="tool copilot"><svg class="s24"><use href="#i-copilot" /></svg></span>
    </div>

    <nav class="bookmarks">
      <span class="bookmark import"><svg class="s16"><use href="#i-import" /></svg><span v-fit="84" class="fit">Import favorites</span></span>
      <span v-for="mark in bookmarks" :key="mark.title" class="bookmark" :style="{ width: mark.slot + 'px' }">
        <svg class="s16"><use :href="'#i-' + mark.icon" /></svg><span v-fit="mark.width" class="fit">{{ mark.title }}</span>
      </span>
    </nav>

    <div class="viewport">
      <aside class="sidebar">
        <div class="brand">Sang Tirta</div>
        <ul>
          <li v-for="item in menu" :key="item.label">
            <svg class="menu-icon" :style="{ width: item.em + 'em' }"><use :href="'#i-' + item.icon" /></svg>
            <a>{{ item.label }}</a>
          </li>
        </ul>
        <button class="logout"><svg class="s16"><use href="#i-signout" /></svg>Logout</button>
      </aside>
      <main class="content">
        <h1>Selamat Datang di Halaman Admin</h1>
        <div class="cards">
          <section v-for="card in cards" :key="card.title" class="card">
            <h5>{{ card.title }}</h5>
            <p>{{ card.text }}</p>
            <a class="go"><svg><use href="#i-arrow" /></svg></a>
          </section>
        </div>
      </main>
      <div class="scrollbar">
        <svg class="s10" viewBox="0 0 10 10"><path d="M5 1.500 8.700 8H1.300z" fill="#a3a3a3" stroke="#a3a3a3" stroke-linejoin="round" /></svg>
        <div class="track"><div class="thumb"></div></div>
        <svg class="s10" viewBox="0 0 10 10"><path d="M5 8.500 8.700 2H1.300z" fill="#a3a3a3" stroke="#a3a3a3" stroke-linejoin="round" /></svg>
      </div>
    </div>

    <footer class="taskbar">
      <div class="apps">
        <span v-for="app in apps" :key="app.icon" class="app" :class="app.state"><svg class="s24"><use :href="'#i-' + app.icon" /></svg></span>
      </div>
      <div class="tray">
        <svg class="s12 chev"><use href="#i-chev" /></svg>
        <svg class="s16 wifi"><use href="#i-wifi" /></svg>
        <svg class="s16 sound"><use href="#i-sound" /></svg>
        <svg class="wide battery"><use href="#i-battery" /></svg>
        <div class="clock"><div><span v-fit="29" class="fit">15:42</span></div><div><span v-fit="62" class="fit">12/09/2024</span></div></div>
        <svg class="s16"><use href="#i-bell" /></svg>
      </div>
    </footer>
  </div>
</template>

<style>
html,
body {
  margin: 0;
  overflow: hidden;
  background: #3b3b3b;
}
</style>

<style scoped>
.screen {
  width: 1366px;
  height: 768px;
  display: flex;
  flex-direction: column;
  overflow: hidden;
  background: #3b3b3b;
  color: #fff;
  font: 11.75px/16px "Open Sans", "Noto Sans", sans-serif;
}
.screen *, .screen *::before, .screen *::after { box-sizing: border-box; }
svg { display: block; flex: none; }
.sprite { position: absolute; }
.s10 { width: 10px; height: 10px; }
.s12 { width: 12px; height: 12px; }
.s14 { width: 14px; height: 14px; }
.s15 { width: 15px; height: 15px; }
.s16 { width: 16px; height: 16px; }
.s17 { width: 17px; height: 17px; }
.s18 { width: 18px; height: 18px; }
.s20 { width: 20px; height: 20px; }
.s24 { width: 24px; height: 24px; }
.wide { width: 18px; height: 16px; }
.fit { display: inline-block; white-space: nowrap; }

.tabstrip { height: 34px; display: flex; align-items: stretch; background: #202020; flex: none; }
.lead { width: 131px; display: flex; align-items: center; padding-left: 10px; }
.lead .s20 { margin-left: 18px; }
.lead .s16 { margin-left: 24px; }
.tab { position: relative; width: 239px; display: flex; align-items: center; gap: 10px; padding: 0 9px 0 7px; }
.tab:not(.active)::before { content: ""; position: absolute; left: 0; top: 7px; height: 20px; width: 1px; background: #5b5b5b; }
.tab-title { flex: 1; }
.tab.active { background: #3b3b3b; border-radius: 8px 8px 0 0; width: 240px; padding-right: 10px; }
.tab.active::before, .tab.active::after {
  content: "";
  position: absolute;
  bottom: 0;
  width: 8px;
  height: 8px;
}
.tab.active::before { left: -8px; background: radial-gradient(circle at 0 0, #202020 7.500px, #3b3b3b 8px); }
.tab.active::after { right: -8px; background: radial-gradient(circle at 100% 0, #202020 7.500px, #3b3b3b 8px); }
.new-tab { display: flex; align-items: center; padding-left: 15px; flex: 1; }
.window-controls { display: flex; }
.window-controls span { width: 46px; display: flex; align-items: center; justify-content: center; }

.toolbar { height: 38px; display: flex; align-items: center; padding-left: 6px; flex: none; }
.tool { width: 44px; display: flex; justify-content: center; }
.address {
  margin-left: 6px;
  width: 905px;
  height: 30px;
  border-radius: 15px;
  background: #2b2b2b;
  display: flex;
  align-items: center;
  padding: 0 5px 0 18px;
}
.url { flex: 1; margin-left: 15px; font-size: 13px; line-height: 18px; color: #9b9b9b; }
.url b { font-weight: 400; color: #fff; }
.in-tool { width: 40px; display: flex; justify-content: center; color: #8e8e8e; }
.ext { margin-left: 6px; }
.rule { width: 1px; height: 16px; background: #5e5e5e; margin: 0 2px; }
.health { padding-left: 1px; }
.copilot { width: 40px; }

.bookmarks { height: 34px; display: flex; align-items: center; padding: 0 0 2px 12px; flex: none; }
.bookmark { display: flex; align-items: center; gap: 6px; flex: none; }
.import { width: 137px; position: relative; }
.import::after { content: ""; position: absolute; left: 122px; top: 0; height: 16px; width: 1px; background: #5e5e5e; }

.viewport {
  height: 610px;
  margin: 0 4px 4px;
  display: flex;
  border-radius: 8px;
  overflow: hidden;
  background: #fff;
  flex: none;
  font-family: Roboto, sans-serif;
}
.sidebar { width: 250px; background: #042331; color: #fff; }
.brand { height: 70px; line-height: 70px; font-size: 22px; text-align: center; background: #063146; }
.sidebar ul { margin: 0; padding: 0; list-style: none; }
.sidebar li {
  height: 67px;
  padding-left: 40px;
  display: flex;
  align-items: center;
  gap: 16px;
  font-size: 20px;
  line-height: 65px;
  border-top: 1px solid rgba(255, 255, 255, .1);
  border-bottom: 1px solid #000;
}
.sidebar li a { text-decoration: underline; }
.menu-icon { height: 1em; margin-bottom: 2px; overflow: visible; stroke: currentColor; stroke-width: 10; }
.logout {
  display: flex;
  align-items: center;
  gap: 4px;
  height: 28px;
  padding: 0;
  border: 2px solid;
  border-color: #4c4c4c #000 #000 #4c4c4c;
  border-radius: 0;
  background: #efefef;
  color: #000;
  font: 16px/24px Roboto, sans-serif;
}
.logout .s16 { margin-bottom: 2px; }

.content { flex: 1; padding: 25px 12px 0; color: #212529; }
.content h1 { margin: 0 0 54.800px; font-size: 56px; font-weight: 300; line-height: 67.200px; white-space: nowrap; }
.cards { display: grid; grid-template-columns: repeat(3, 1fr); gap: 24px; }
.card {
  height: 144px;
  padding: 16px;
  border: 1px solid rgba(0, 0, 0, .175);
  border-radius: 6px;
  box-shadow: 0 2px 4px rgba(0, 0, 0, .075);
}
.card h5 { margin: 0 0 8px; font-size: 20px; font-weight: 500; line-height: 24px; }
.card p { margin: 0 0 16px; font-size: 16px; line-height: 24px; }
.go { display: flex; align-items: center; justify-content: center; width: 40px; height: 38px; border-radius: 6px; background: #212529; color: #fff; }
.go svg { width: 14px; height: 16px; margin-bottom: 2px; overflow: visible; stroke: currentColor; stroke-width: 12; }

.scrollbar { width: 15px; background: #2c2c2c; display: flex; flex-direction: column; align-items: center; padding: 7px 0; }
.track { flex: 1; padding-top: 6px; }
.thumb { width: 9px; height: 277px; border-radius: 5px; background: #9f9f9f; }

.taskbar {
  height: 48px;
  display: flex;
  justify-content: space-between;
  flex: none;
  border-top: 1px solid #484644;
  background: linear-gradient(90deg, #30241a, #2a221c 12%, #24221f 25%, #24211f 60%, #231f1e);
}
.apps { display: flex; gap: 4px; padding: 3px 0 0 13px; }
.app { position: relative; width: 40px; height: 40px; border-radius: 4px; display: flex; align-items: center; justify-content: center; }
.app.focus { background: #38312c; box-shadow: inset 0 0 0 1px #413a35; }
.app.open::after, .app.focus::after {
  content: "";
  position: absolute;
  bottom: 1px;
  left: 17px;
  width: 6px;
  height: 3px;
  border-radius: 2px;
  background: #9b9895;
}
.app.focus::after { left: 12px; width: 16px; background: #f4695f; }
.tray { display: flex; align-items: center; padding: 0 20px 1px 0; }
.chev { margin-right: 18px; }
.wifi { margin-right: 7px; }
.sound { margin-right: 7px; }
.clock { width: 79px; margin-right: 7px; text-align: right; font-size: 11px; line-height: 16px; color: #fff; }
</style>
